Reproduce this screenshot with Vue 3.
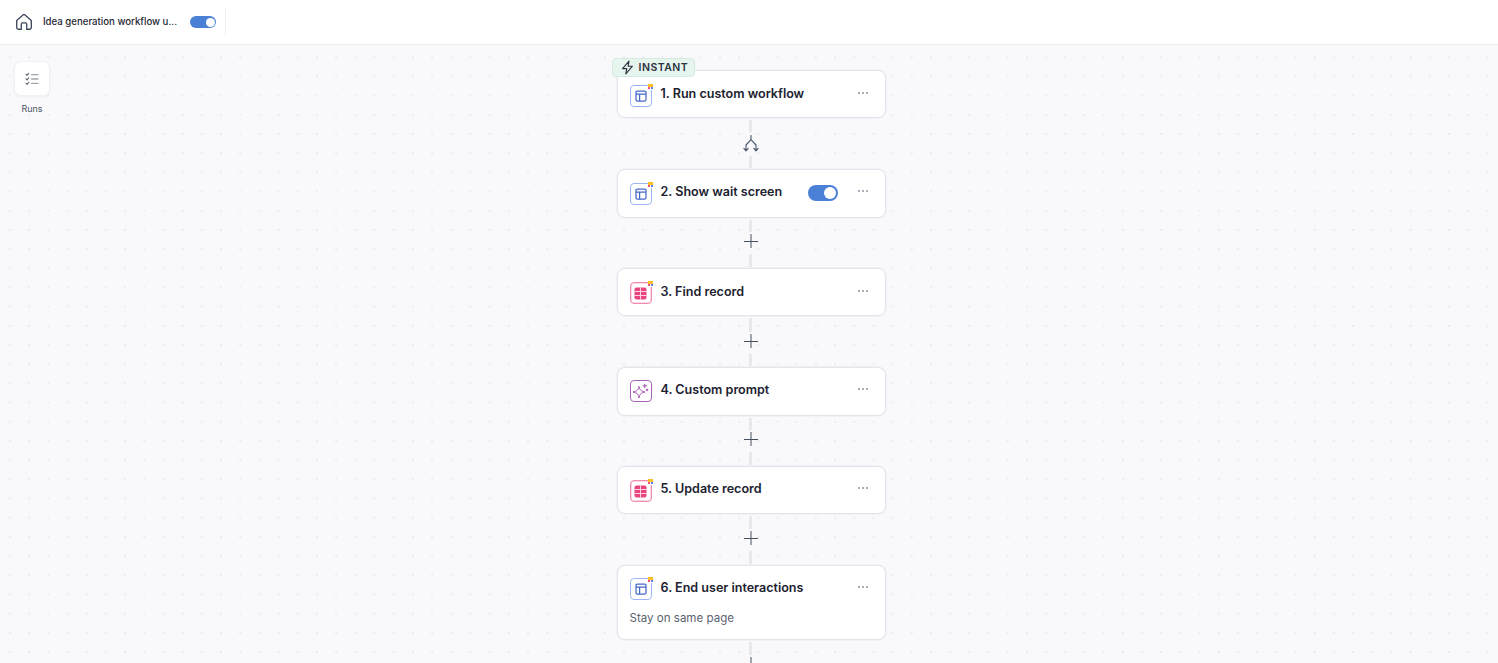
<script setup>
const steps = [
  { id: 1, title: '1. Run custom workflow', icon: 'layout', conn: 'branch', h: 48, gap: 51, pt: 13, ty: 2, dash: 12 },
  { id: 2, title: '2. Show wait screen', icon: 'layout', toggle: true, conn: 'plus', h: 49, gap: 50, pt: 12, ty: 2, dash: 12 },
  { id: 3, title: '3. Find record', icon: 'table', conn: 'plus', h: 48, gap: 51, pt: 13, ty: 0, dash: 14 },
  { id: 4, title: '4. Custom prompt', icon: 'spark', conn: 'plus', h: 49, gap: 50, pt: 12, ty: 0, dash: 12 },
  { id: 5, title: '5. Update record', icon: 'table', conn: 'plus', h: 48, gap: 51, pt: 12, ty: 2, dash: 13 },
  { id: 6, title: '6. End user interactions', icon: 'layout', sub: 'Stay on same page', conn: 'plus', h: 75, gap: 51, pt: 12, ty: 0, dash: 13 },
]
</script>

<template>
  <div class="page">
    <header class="topbar">
      <svg class="home" width="18" height="18" viewBox="0 0 18 18" fill="none" stroke="#3f4a5c" stroke-width="1.35" stroke-linejoin="round" stroke-linecap="round">
        <path d="M1.7 7.4 8 1.9a1.5 1.5 0 0 1 2 0l6.3 5.5v7.2a1.6 1.6 0 0 1-1.6 1.6h-3v-5a1.4 1.4 0 0 0-1.4-1.4H7.7a1.4 1.4 0 0 0-1.4 1.4v5h-3a1.6 1.6 0 0 1-1.6-1.6z" />
      </svg>
      <span class="wf-name">Idea generation workflow u...</span>
      <span class="toggle small"><i></i></span>
      <span class="divider"></span>
    </header>

    <main class="canvas">
      <div class="runs">
        <button class="runs-btn" type="button">
          <svg width="14" height="14" viewBox="0 0 14 14" fill="none" stroke-linecap="round" stroke-linejoin="round">
            <path d="M1 2.3l1 1 1.7-1.9M1 6.8l1 1 1.7-1.9M1 11.3l1 1 1.7-1.9" stroke="#5a6270" stroke-width="1.1" />
            <path d="M6.5 2.6H13M6.5 7H13M6.5 11.4H13" stroke="#a3a8b0" stroke-width="1.4" />
          </svg>
        </button>
        <span class="runs-label">Runs</span>
      </div>

      <div class="flow">
        <template v-for="s in steps" :key="s.id">
          <section class="card" :style="{ height: s.h + 'px', paddingTop: s.pt + 'px' }">
            <span v-if="s.id === 1" class="badge">
              <svg width="15" height="15" viewBox="0 0 14 14" fill="none" stroke="#2b3340" stroke-width="1.05" stroke-linejoin="round">
                <path d="M8.4 1 2.4 8h3.9l-.9 5 6.2-7.2H7.6z" />
              </svg>
              INSTANT
            </span>
            <div class="row">
              <span class="tile" :class="s.icon" :style="{ marginTop: s.ty + 'px' }">
                <svg v-if="s.icon === 'layout'" width="12" height="12" viewBox="0 0 12 12" fill="none" stroke="#4468c8" stroke-width="1.25">
                  <rect x="1" y="1" width="10" height="10" rx="1.2" />
                  <path d="M1 4.2h10M4.6 4.2V11" />
                </svg>
                <svg v-else-if="s.icon === 'table'" width="13" height="13" viewBox="0 0 13 13" fill="none">
                  <rect x="0.5" y="0.5" width="12" height="12" rx="2" fill="#e8447f" />
                  <path d="M0.5 4.5h12M0.5 8.5h12M6.5 0.5v12" stroke="#fde3ec" stroke-width="0.9" />
                </svg>
                <svg v-else width="17" height="17" viewBox="0 0 17 17" fill="none" stroke="#9a4aa8" stroke-width="1" stroke-linejoin="round">
                  <path d="M7 3.4c.7 3.5 2 4.8 6 5.6-4 .8-5.3 2.100-6 6-.7-3.900-2-5.200-6-6 4-.8 5.300-2.100 6-5.600z" />
                  <path d="M12.800 1.200v3.400M11.100 2.900h3.400M15 6v1.800M14.100 6.900h1.800" stroke-linecap="round" />
                </svg>
                <span v-if="s.icon !== 'spark'" class="app-mark">
                  <b class="m-top"></b><b class="m-a"></b><b class="m-b"></b>
                </span>
              </span>
              <h3 class="title">{{ s.title }}</h3>
              <span v-if="s.toggle" class="toggle"><i></i></span>
              <svg class="more" width="12" height="4" viewBox="0 0 12 4" fill="#3f4a5c">
                <circle cx="2" cy="2" r="0.8" /><circle cx="6" cy="2" r="0.8" /><circle cx="10" cy="2" r="0.8" />
              </svg>
            </div>
            <p v-if="s.sub" class="sub">{{ s.sub }}</p>
          </section>

          <div class="connector" :class="s.conn" :style="{ height: s.gap + 'px' }">
            <span class="dash top" :style="{ height: s.dash + 'px' }"></span>
            <svg v-if="s.conn === 'branch'" class="c-icon" width="16" height="17" viewBox="0 0 16 17" fill="none" stroke="#47556b" stroke-width="1.1" stroke-linecap="round" stroke-linejoin="round">
              <path d="M8 0.5v4.2L3 10v5.6M8 4.7l5 5.3v5.6M0.9 13.4 3 15.8l2.1-2.4M10.9 13.4l2.1 2.4 2.1-2.4" />
            </svg>
            <svg v-else class="c-icon" width="14" height="14" viewBox="0 0 14 14" fill="none" stroke="#47505e" stroke-width="1" stroke-linecap="butt">
              <path d="M7 0v14M0 7.500h14" />
            </svg>
            <span class="dash bottom"></span>
          </div>
        </template>
      </div>
    </main>
  </div>
</template>

<style>
html, body { margin: 0; overflow: hidden; }
</style>

<style scoped>
.page {
  width: 1498px;
  height: 663px;
  overflow: hidden;
  display: flex;
  flex-direction: column;
  font-family: Inter, "Liberation Sans", sans-serif;
  background: #f9f9fc;
}
.topbar {
  height: 44px;
  flex: none;
  display: flex;
  align-items: center;
  background: #fff;
  border-bottom: 1px solid #eceef1;
  padding-left: 15px;
}
.home { flex: none; }
.wf-name {
  margin: 0 0 2px 10px;
  width: 147px;
  font-size: 9.65px;
  font-weight: 500;
  color: #1f2733;
  white-space: nowrap;
}
.toggle {
  flex: none;
  width: 30px;
  height: 16px;
  border-radius: 8px;
  background: #4a80d6;
  position: relative;
  display: block;
  margin-right: 19px;
}
.toggle i {
  position: absolute;
  top: 2px;
  right: 2px;
  width: 12px;
  height: 12px;
  border-radius: 50%;
  background: #fff;
}
.toggle.small { width: 26px; height: 12px; border-radius: 6px; margin-right: 0; }
.toggle.small i { width: 9px; height: 9px; top: 1.5px; right: 1.5px; }
.divider {
  width: 1px;
  height: 26px;
  background: #eceef1;
  margin-left: 9px;
}
.canvas {
  flex: 1;
  position: relative;
  overflow: hidden;
  background-color: #f9f9fc;
  background-image: radial-gradient(circle at center, #ebebf0 0.9px, transparent 1.3px);
  background-size: 19.2px 19.2px;
  background-position: 0.4px 2.7px;
  display: flex;
  justify-content: center;
  padding: 25px 0 0 4px;
}
.runs {
  position: absolute;
  left: 14px;
  top: 16px;
  width: 36px;
  display: flex;
  flex-direction: column;
  align-items: center;
}
.runs-btn {
  width: 36px;
  height: 35px;
  padding: 0;
  border: 1px solid #f1f1f4;
  border-radius: 7px;
  background: #fff;
  display: flex;
  align-items: center;
  justify-content: center;
  box-shadow: 0 1px 3px rgba(30, 40, 60, 0.05);
}
.runs-label {
  margin-top: 7px;
  font-size: 9px;
  font-weight: 400;
  color: #4b5563;
}
.flow {
  width: 269px;
  flex: none;
  display: flex;
  flex-direction: column;
}
.card {
  flex: none;
  box-sizing: border-box;
  position: relative;
  background: #fff;
  border: 1px solid #e4e4ea;
  border-radius: 8px;
  box-shadow: 0 0 0 1px rgba(229, 229, 234, 0.35);
  padding: 12px 12px 0;
}
.badge {
  position: absolute;
  left: -6px;
  top: -13px;
  height: 19px;
  width: 83px;
  box-sizing: border-box;
  display: flex;
  align-items: center;
  gap: 4px;
  padding: 0 0 1px 7px;
  font-size: 10.5px;
  font-weight: 600;
  letter-spacing: 0.5px;
  color: #2b3340;
  background: #e7f5ef;
  border: 1px solid #d3ebe1;
  border-radius: 4px;
}
.row {
  display: flex;
  align-items: center;
  height: 22px;
}
.tile {
  flex: none;
  box-sizing: border-box;
  width: 22px;
  height: 22px;
  border-radius: 4px;
  border: 1px solid #9db6f2;
  display: flex;
  align-items: center;
  justify-content: center;
  position: relative;
  background: #fff;
}
.tile.table { border-color: #f08cb0; box-shadow: inset 0 0 0 0.5px #f6b3cb; }
.tile.spark { border-color: #a765b4; }
.app-mark {
  position: absolute;
  right: -2px;
  top: -2px;
  width: 5px;
  height: 6px;
  background: #fff;
}
.app-mark b { position: absolute; display: block; }
.m-top { left: 0; top: 0; width: 5px; height: 3px; background: #fbbf24; }
.m-a { left: 0; top: 3px; width: 2px; height: 2px; background: #ef4b7c; }
.m-b { left: 3px; top: 3px; width: 2px; height: 2px; background: #5b7cf0; }
.title {
  flex: 1;
  margin: 0 0 3px 9px;
  font-size: 12.55px;
  font-weight: 600;
  color: #1c2230;
  white-space: nowrap;
}
.more {
  flex: none;
  margin: 0 4px 4px 0;
}
.sub {
  margin: 11px 0 0;
  font-size: 11.55px;
  line-height: 15px;
  color: #5b6370;
}
.connector {
  flex: none;
  display: flex;
  flex-direction: column;
  align-items: center;
  padding: 2px 1px 1px 0;
  box-sizing: border-box;
}
.dash {
  width: 3px;
  background: #e8e8ec;
}
.dash.top { margin-bottom: 2px; }
.dash.bottom { flex: 1; margin-top: 6px; }
.connector.branch .dash.top { margin-bottom: 3px; }
.connector.branch .dash.bottom { margin-top: 4px; }
.c-icon { flex: none; }
</style>
